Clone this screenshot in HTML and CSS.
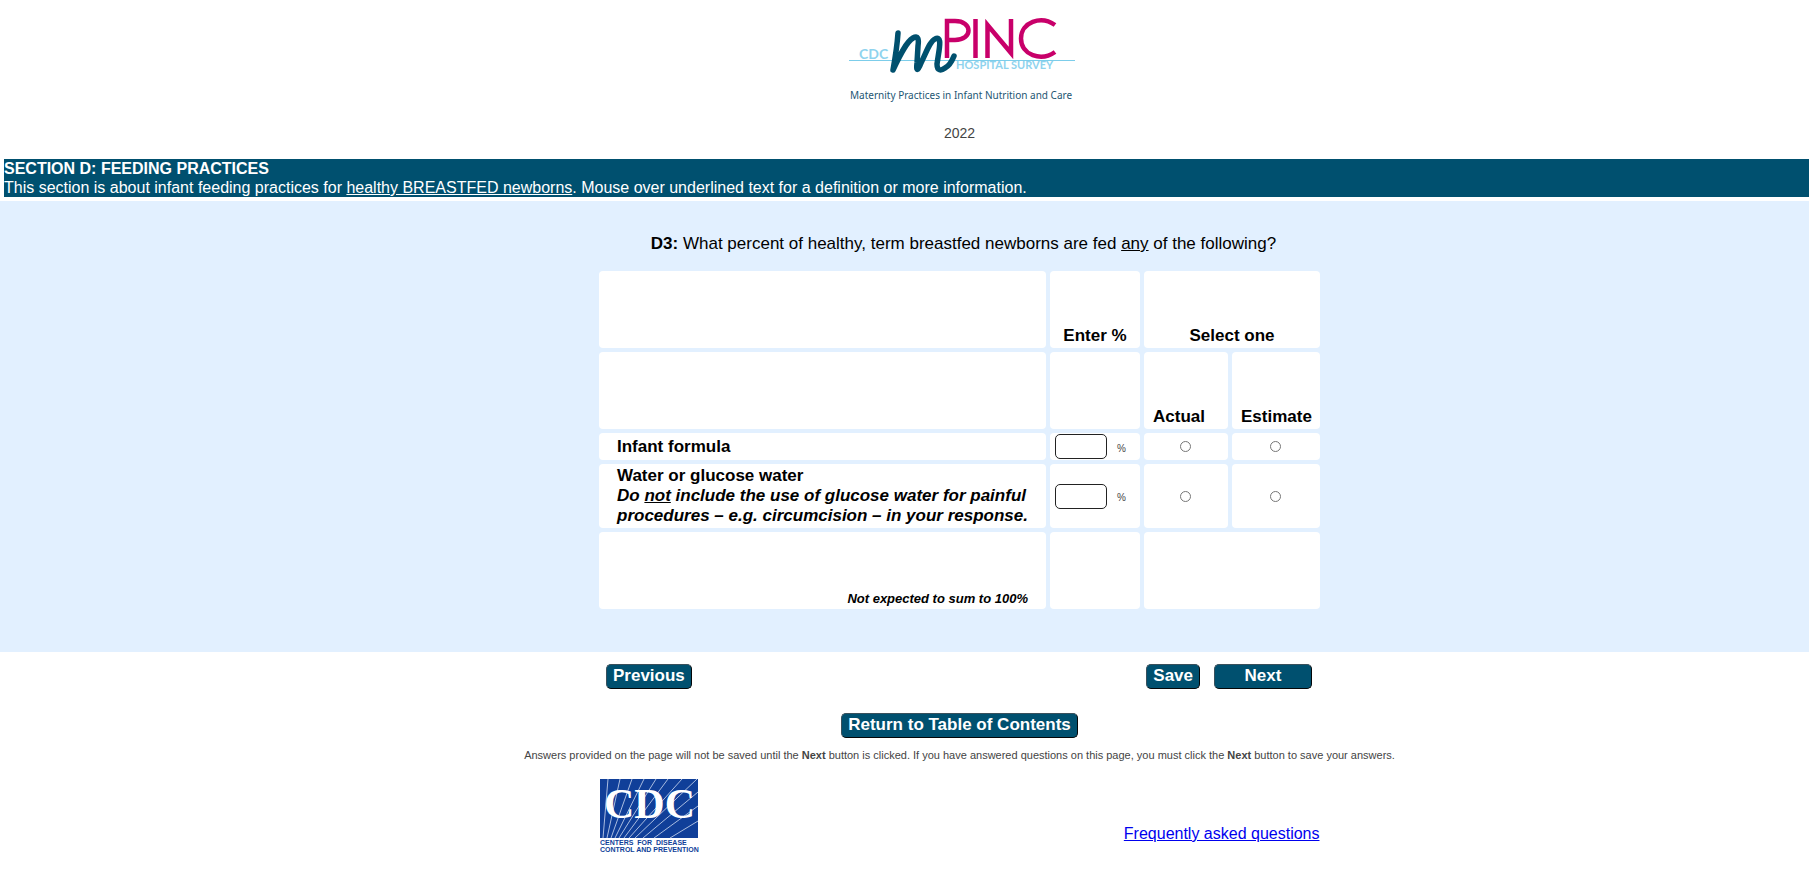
FILE: index.html
```html
<!DOCTYPE html>
<html lang="en">
<head>
  <meta charset="UTF-8">
  <meta name="viewport" content="width=device-width, initial-scale=1.0">
  <title>CDC mPINC Hospital Survey</title>
  <link rel="stylesheet" href="styles.css">
</head>
<body>
  <header class="page-header">
    <svg class="mpinc-logo" width="230" height="92" viewBox="-3 0 230 92" role="img" aria-label="CDC mPINC Hospital Survey">
      <path d="M1 47.500H227" stroke="#7ccdea" stroke-width="1"/>
      <text x="11" y="46" class="logo-cdc">CDC</text>
      <g fill="none" stroke="#c8006a" stroke-width="4.500">
        <path d="M99 45V8H107C125 8 125 27 107 27H99"/>
        <path d="M127.500 6V45"/>
        <path d="M139.500 45V12L163 40V6"/>
        <path d="M207 12C193 2 173 9 173 25.500C173 42 193 49 207 39"/>
      </g>
      <path d="M50 20C49 35 47 46 45 57C51 44 58 29 65 25C70 22 71 26 70 33L69 50C68 59 70 58 73 50C78 40 82 28 87 26C93 23 92 31 91 38L89 51C89 58 93 58 97 55C101 53 104 48 106 43" fill="none" stroke="#00506e" stroke-width="5.500" stroke-linecap="round" stroke-linejoin="round"/>
      <text x="108" y="56" class="logo-survey">HOSPITAL SURVEY</text>
      <text x="2" y="86" class="logo-tagline">Maternity Practices in Infant Nutrition and Care</text>
    </svg>
    <div class="year">2022</div>
  </header>

  <div class="section-bar">
    <strong>SECTION D: FEEDING PRACTICES</strong><br>
    This section is about infant feeding practices for <u>healthy BREASTFED newborns</u>. Mouse over underlined text for a definition or more information.
  </div>

  <form class="survey">
    <div class="question-area">
      <p class="question"><strong>D3:</strong> What percent of healthy, term breastfed newborns are fed <u>any</u> of the following?</p>
      <table class="grid">
        <colgroup>
          <col class="col-item">
          <col class="col-percent">
          <col class="col-actual">
          <col class="col-estimate">
        </colgroup>
        <tr class="tall">
          <td></td>
          <th>Enter %</th>
          <th colspan="2">Select one</th>
        </tr>
        <tr class="tall">
          <td></td>
          <td></td>
          <th class="option" id="actual">Actual</th>
          <th class="option" id="estimate">Estimate</th>
        </tr>
        <tr>
          <th class="item" id="formula"><label for="formulaPct">Infant formula</label></th>
          <td class="percent"><div class="entry"><input type="text" id="formulaPct" name="formulaPct" maxlength="3"><span>%</span></div></td>
          <td class="choice"><input type="radio" name="formulaType" value="actual" aria-labelledby="formula actual"></td>
          <td class="choice"><input type="radio" name="formulaType" value="estimate" aria-labelledby="formula estimate"></td>
        </tr>
        <tr>
          <th class="item" id="water"><label for="waterPct">Water or glucose water<br><em>Do <u>not</u> include the use of glucose water for painful procedures – e.g. circumcision – in your response.</em></label></th>
          <td class="percent"><div class="entry"><input type="text" id="waterPct" name="waterPct" maxlength="3"><span>%</span></div></td>
          <td class="choice"><input type="radio" name="waterType" value="actual" aria-labelledby="water actual"></td>
          <td class="choice"><input type="radio" name="waterType" value="estimate" aria-labelledby="water estimate"></td>
        </tr>
        <tr class="tall">
          <td class="note">Not expected to sum to 100%</td>
          <td></td>
          <td colspan="2"></td>
        </tr>
      </table>
    </div>

    <div class="actions">
      <div class="button-row">
        <button type="button" class="btn">Previous</button>
        <div class="button-group">
          <button type="button" class="btn btn-save">Save</button>
          <button type="button" class="btn btn-next">Next</button>
        </div>
      </div>
      <button type="button" class="btn btn-toc">Return to Table of Contents</button>
      <p class="save-note">Answers provided on the page will not be saved until the <b>Next</b> button is clicked. If you have answered questions on this page, you must click the <b>Next</b> button to save your answers.</p>
    </div>
  </form>

  <footer class="page-footer">
    <div class="footer-row">
      <svg class="cdc-logo" width="102" height="76" viewBox="0 0 102 76" role="img" aria-label="Centers for Disease Control and Prevention">
        <rect width="98" height="59" fill="#103f99"/>
        <path d="M3 59L8 0M7 59L20 0M11 59L32 0M15 59L44 0M19 59L56 0M24 59L68 0M29 59L82 0M35 59L97 0M43 59L98 13M54 59L98 27M70 59L98 42" stroke="#a9bce0" stroke-width="1"/>
        <text x="4" y="39" class="cdc-name">CDC</text>
        <text x="0" y="66" class="cdc-full">CENTERS&#160; FOR&#160; DISEASE</text>
        <text x="0" y="73" class="cdc-full">CONTROL AND PREVENTION</text>
      </svg>
      <a href="#faq">Frequently asked questions</a>
    </div>
  </footer>
</body>
</html>
```
FILE: styles.css
```css
body {
  margin: 0;
  background: #fff;
  color: #000;
  font-family: Arial, "Liberation Sans", sans-serif;
  font-size: 16px;
}

/* Header */
.page-header {
  display: flex;
  flex-direction: column;
  align-items: center;
  padding: 13px 0 17px 110px;
}
.mpinc-logo, .cdc-logo {
  overflow: visible;
}
.year {
  margin-top: 19px;
  font-size: 14px;
  line-height: 18px;
  color: #444;
}
.logo-cdc {
  font-family: Lato, sans-serif;
  font-size: 14px;
  font-weight: 700;
  fill: #8fd3ee;
}
.logo-survey {
  font-family: Lato, sans-serif;
  font-size: 11px;
  font-weight: 700;
  fill: #8fd3ee;
}
.logo-tagline {
  font-family: "Noto Sans", sans-serif;
  font-size: 10px;
  fill: #1d5673;
}
.section-bar {
  margin: 0 0 4px 4px;
  background: #00506f;
  color: #fff;
  line-height: 19px;
}

/* Question */
.question-area {
  padding: 33px 0 39px 110px;
  background: #e2f0ff;
}
.question {
  margin: 0 0 13px;
  padding-left: 8px;
  font-size: 17px;
  line-height: 20px;
  text-align: center;
}
.grid {
  width: 729px;
  margin: 0 auto;
  border-spacing: 4px;
  table-layout: fixed;
  font-size: 17px;
  line-height: 20px;
}
.col-percent {
  width: 90px;
}
.col-actual {
  width: 84px;
}
.col-estimate {
  width: 88px;
}
.grid td, .grid th {
  padding: 2px 5px;
  background: #fff;
  border-radius: 4px;
}
.grid .tall td, .grid .tall th {
  height: 73px;
  vertical-align: bottom;
}
.grid .option {
  padding-left: 9px;
  text-align: left;
}
.grid .item {
  padding: 2px 18px;
  text-align: left;
}
.grid .note {
  padding-right: 18px;
  font-size: 13px;
  line-height: 16px;
  font-weight: bold;
  font-style: italic;
  text-align: right;
}
.grid .percent {
  padding-top: 1px;
  padding-bottom: 1px;
}
.entry {
  display: flex;
  align-items: center;
  gap: 10px;
  font-size: 10px;
  color: #444;
}
.entry input {
  box-sizing: border-box;
  width: 52px;
  height: 25px;
  border: 1px solid #222;
  border-radius: 5px;
}
.entry span {
  padding-top: 4px;
}
.grid .choice {
  text-align: center;
}
.choice input {
  display: block;
  width: 11px;
  height: 11px;
  margin: 0 auto;
}

/* Buttons */
.actions {
  display: flex;
  flex-direction: column;
  align-items: center;
  padding: 12px 0 0 110px;
}
.button-row {
  display: flex;
  justify-content: space-between;
  box-sizing: border-box;
  width: 721px;
  padding: 0 8px 0 7px;
}
.button-group {
  display: flex;
  gap: 14px;
}
.btn {
  height: 25px;
  padding: 0 6px 2px;
  border: 1px outset #39505c;
  border-radius: 5px;
  background: #00506f;
  color: #fff;
  font-family: inherit;
  font-size: 17px;
  font-weight: bold;
  cursor: pointer;
}
.btn-next {
  width: 98px;
}
.btn-toc {
  margin-top: 24px;
}
.save-note {
  margin: 9px 0 0;
  font-size: 11px;
  line-height: 16px;
  color: #444;
}

/* Footer */
.page-footer {
  padding: 16px 0 24px 110px;
}
.footer-row {
  display: flex;
  justify-content: space-between;
  align-items: flex-end;
  width: 720px;
  margin: 0 auto;
}
.footer-row a {
  margin-bottom: 11px;
  line-height: 20px;
  color: #0000ee;
}
.cdc-name {
  font-family: "Liberation Serif", serif;
  font-size: 42px;
  font-weight: 700;
  fill: #fff;
}
.cdc-full {
  font-size: 7px;
  font-weight: 700;
  fill: #103f99;
}
```
